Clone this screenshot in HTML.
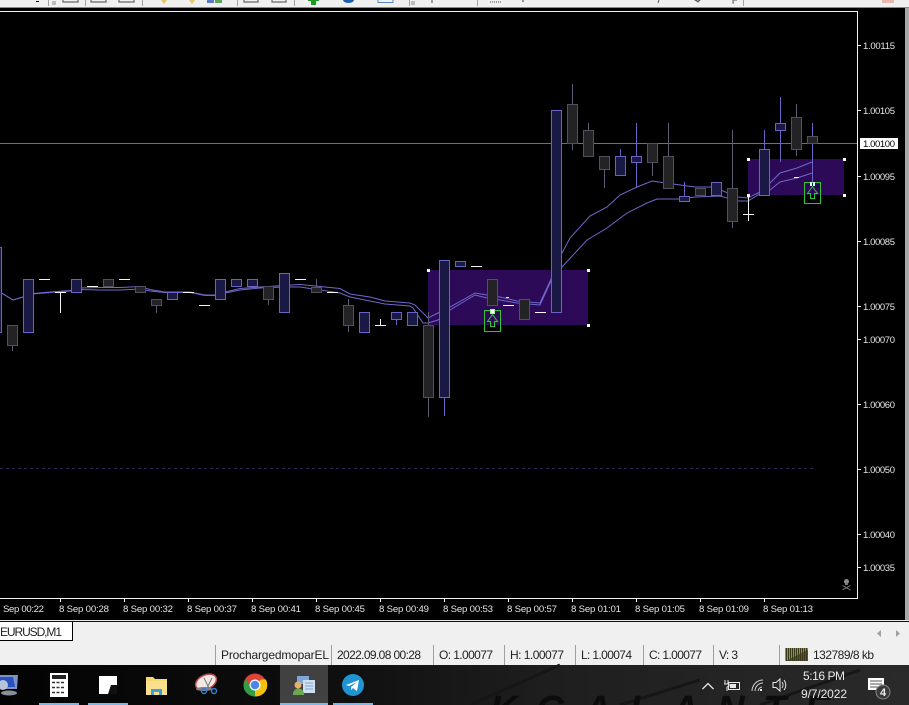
<!DOCTYPE html>
<html><head><meta charset="utf-8"><style>
html,body{margin:0;padding:0;background:#000;width:909px;height:705px;overflow:hidden}
svg{display:block}
text{font-family:"Liberation Sans",sans-serif}
.p{font-size:9.500px;fill:#e4e4e4}
.t{font-size:9.600px;fill:#e4e4e4}
.s{font-size:12px;fill:#222}
</style></head><body>
<svg width="909" height="705" viewBox="0 0 909 705" xmlns="http://www.w3.org/2000/svg">
<defs><linearGradient id="tb" x1="0" x2="1" y1="0" y2="0"><stop offset="0" stop-color="#030303"/><stop offset=".35" stop-color="#0e0e0e"/><stop offset=".6" stop-color="#1e1e1e"/><stop offset="1" stop-color="#2a2a2a"/></linearGradient></defs>
<rect width="909" height="705" fill="#000"/>
<!-- top toolbar -->
<rect width="909" height="7" fill="#f0f0f0"/>
<rect y="7" width="909" height="1" fill="#8a8a8a"/>
<g fill="none" stroke="#a0a0a0"><path d="M48.500 0v6M85.500 0v6M142.500 0v6M237.500 0v6M294.500 0v6M409.500 0v6M477.500 0v6M743.500 0v6"/></g>
<path d="M52 2h4M52 4h4M411 2h4M411 4h4" stroke="#888"/>
<g stroke="#666" stroke-width="1.200" fill="none"><path d="M63 0v2h15v-2M91 0v2h15v-2M119 0v2h15v-2M244 0v2h14v-2M272 0v2h14v-2"/></g>
<path d="M36 1h3v1h-3z" fill="#000"/>
<path d="M161 0l3 4 3-4zM189 0l3 4 3-4z" fill="#e3c766"/>
<path d="M207 0h7v3h-7z" fill="#5a78c8"/><path d="M215 0h7v3h-7z" fill="#5aa85a"/>
<path d="M308 0h11v1h-11z" fill="#1c9a26"/><rect x="311" y="0" width="5" height="5" fill="#1c9a26"/>
<path d="M343 0a5.500 3 0 0 0 11 0z" fill="#1f5fb0"/>
<path d="M378 0v2.500h15V0" fill="none" stroke="#5a86c0"/>
<path d="M432 0v3" stroke="#444"/><path d="M490 2h11" stroke="#444" stroke-dasharray="1 1"/><path d="M523 0v2" stroke="#333"/>
<path d="M659 0l-1 3M695 0h5l-2 2zM733 0v3h1M733 0h4" stroke="#555" fill="none"/>
<rect x="882" y="0" width="12" height="3" fill="#e8b9a8"/>
<rect x="905" y="8" width="4" height="614" fill="#a8a8a8"/>
<!-- chart frame -->
<path d="M0 11.500H857.500V598.500H0" fill="none" stroke="#f2f2f2"/>
<!-- purple boxes -->
<rect x="428" y="270" width="160" height="55" fill="#2c0a58"/>
<rect x="748" y="159" width="96" height="36" fill="#2c0a58"/>
<!-- level lines -->
<path d="M0 143.500H857" stroke="#70707c"/>
<path d="M0 468.500H813" stroke="#2a2850" stroke-dasharray="3 3"/>
<!-- MAs -->
<g fill="none" stroke="#6f68cc" stroke-width="1">
<path d="M0 292L13 300L23 297L33 293.500L50 292L70 290.500L80 288L100 287.500L120 287.500L140 286.500L150 289.500L165 292L190 292L205 295L215 295L225 292L240 288.500L260 287L284 285.500L300 284.500L340 288.500L350 294L370 297L385 301L410 303L415 305L428 318L438 313L450 307L475 293L487 295L500 297L517 301L540 303L552 277L562 253L570 238L590 216L607 207L620 195L637 187L652 181L673 184L695 187L713 187L738 197L748 198L760 192L770 183L780 173L797 168L812 162"/>
<path d="M0 292L13 300L23 297L33 294L50 292.500L70 291L80 289.500L100 290L120 290L140 289L150 291L165 292.500L190 292.500L205 295.500L215 295.500L225 293L240 290L260 288L284 287L300 287L340 293L350 297L370 301L385 304L410 306L413 308L423 323L428 323L438 320L450 310L475 295L487 298L500 300L517 303L540 305L550 283L562 267L587 240L607 228L627 213L647 203L657 199L680 199L695 197L720 196L738 201L748 201L758 195L770 190L780 182L797 178L812 173"/>
</g>
<!-- dark wicks -->
<path d="M12.500 346V351M156.500 305V313M268.500 299V305M316.500 279V287M348.500 299V332M428.500 312V417M524.500 319V320M572.500 84V150M588.500 123V130M604.500 169V188M652.500 162V176M668.500 123V156M732.500 130V228M796.500 104V156" stroke="#5c5c74"/>
<!-- blue wicks -->
<path d="M444.500 397V416M396.500 319V325M620.500 149V156M636.500 123V188M684.500 182V196M764.500 130V149M780.500 97V162M812.500 123V182" stroke="#6a62c4"/>
<!-- blue bodies -->
<path d="M-3.500 247.500h5v85h-5zM23.500 279.500h10v53h-10zM71.500 279.500h10v13h-10zM167.500 292.500h10v7h-10zM215.500 279.500h10v20h-10zM231.500 279.500h10v7h-10zM247.500 279.500h10v7h-10zM279.500 273.500h10v39h-10zM359.500 312.500h10v20h-10zM391.500 312.500h10v7h-10zM407.500 312.500h10v13h-10zM439.500 260.500h10v137h-10zM455.500 261.500h10v5h-10zM551.500 110.500h10v202h-10zM615.500 156.500h10v19h-10zM631.500 156.500h10v6h-10zM679.500 196.500h10v5h-10zM711.500 182.500h10v13h-10zM759.500 149.500h10v46h-10zM775.500 123.500h10v7h-10z" fill="#1a1845" stroke="#6a62c4"/>
<!-- dark bodies -->
<path d="M7.500 325.500h10v20h-10zM103.500 279.500h10v7h-10zM135.500 286.500h10v6h-10zM151.500 299.500h10v6h-10zM263.500 286.500h10v13h-10zM311.500 287.500h10v5h-10zM343.500 305.500h10v20h-10zM423.500 325.500h10v72h-10zM487.500 279.500h10v26h-10zM519.500 299.500h10v20h-10zM567.500 104.500h10v39h-10zM583.500 130.500h10v26h-10zM599.500 156.500h10v13h-10zM647.500 143.500h10v19h-10zM663.500 156.500h10v32h-10zM695.500 188.500h10v7h-10zM727.500 188.500h10v33h-10zM791.500 117.500h10v32h-10zM807.500 136.500h10v7h-10z" fill="#232326" stroke="#50505e"/>
<!-- white dojis -->
<path d="M39 279.500h11M55 292.500h11M60.500 292V313M87 286.500h11M119 279.500h11M183 292.500h11M199 305.500h11M295 279.500h11M327 292.500h11M375 325.500h11M380.500 319V325M471 266.500h11M503 305.500h11M535 312.500h11M506 297.500h3M794 177.500h5" stroke="#f4f4f4"/>
<path d="M748.500 196V221M743 214.500h11" stroke="#f4f4f4"/>
<!-- handles -->
<g fill="#fff"><rect x="427" y="269" width="3" height="3"/><rect x="587" y="269" width="3" height="3"/><rect x="587" y="324" width="3" height="3"/><rect x="747" y="158" width="3" height="3"/><rect x="843" y="158" width="3" height="3"/><rect x="843" y="194" width="3" height="3"/><rect x="747" y="194" width="3" height="3"/></g>
<!-- arrows -->
<g fill="none" stroke="#2fc62f">
<rect x="484.500" y="310.500" width="16" height="21"/>
<path d="M492.500 314.500L487.500 321.500H490.500V326.500H494.500V321.500H497.500Z"/>
<rect x="804.500" y="182.500" width="16" height="21"/>
<path d="M812.500 186.500L807.500 193.500H810.500V198.500H814.500V193.500H817.500Z"/>
</g>
<rect x="490" y="309" width="5" height="5" fill="#a8f0a0"/><rect x="491" y="310" width="3" height="3" fill="#fff"/>
<rect x="810" y="182" width="2" height="4" fill="#dff"/><rect x="813" y="182" width="2" height="4" fill="#dff"/>
<!-- price axis -->
<path d="M857 45.500h4M857 110.500h4M857 176.500h4M857 241.500h4M857 306.500h4M857 339.500h4M857 404.500h4M857 469.500h4M857 534.500h4M857 567.500h4" stroke="#eee"/>
<text class="p" x="863" y="49" textLength="32">1.00115</text>
<text class="p" x="863" y="114" textLength="32">1.00105</text>
<text class="p" x="863" y="180" textLength="32">1.00095</text>
<text class="p" x="863" y="245" textLength="32">1.00085</text>
<text class="p" x="863" y="310" textLength="32">1.00075</text>
<text class="p" x="863" y="343" textLength="32">1.00070</text>
<text class="p" x="863" y="408" textLength="32">1.00060</text>
<text class="p" x="863" y="473" textLength="32">1.00050</text>
<text class="p" x="863" y="538" textLength="32">1.00040</text>
<text class="p" x="863" y="571" textLength="32">1.00035</text>
<rect x="860" y="138" width="38" height="11" fill="#fff"/>
<text x="863" y="147" font-size="9.500" fill="#000" textLength="32">1.00100</text>
<!-- skull -->
<circle cx="846.500" cy="581.500" r="2.500" fill="#8a8a8a"/><rect x="845" y="583" width="3" height="2" fill="#777"/>
<path d="M842.500 585.500l8 4.500M850.500 585.500l-8 4.500" stroke="#808080" fill="none"/>
<!-- time axis -->
<path d="M60.500 598v4M124.500 598v4M188.500 598v4M252.500 598v4M316.500 598v4M380.500 598v4M444.500 598v4M508.500 598v4M572.500 598v4M636.500 598v4M700.500 598v4M764.500 598v4" stroke="#eee"/>
<text class="t" x="3" y="612" textLength="41">Sep 00:22</text>
<text class="t" x="59" y="612" textLength="50">8 Sep 00:28</text>
<text class="t" x="123" y="612" textLength="50">8 Sep 00:32</text>
<text class="t" x="187" y="612" textLength="50">8 Sep 00:37</text>
<text class="t" x="251" y="612" textLength="50">8 Sep 00:41</text>
<text class="t" x="315" y="612" textLength="50">8 Sep 00:45</text>
<text class="t" x="379" y="612" textLength="50">8 Sep 00:49</text>
<text class="t" x="443" y="612" textLength="50">8 Sep 00:53</text>
<text class="t" x="507" y="612" textLength="50">8 Sep 00:57</text>
<text class="t" x="571" y="612" textLength="50">8 Sep 01:01</text>
<text class="t" x="635" y="612" textLength="50">8 Sep 01:05</text>
<text class="t" x="699" y="612" textLength="50">8 Sep 01:09</text>
<text class="t" x="763" y="612" textLength="50">8 Sep 01:13</text>
<!-- tab strip -->
<rect y="620" width="909" height="1" fill="#e8e8e8"/>
<rect y="621" width="909" height="1" fill="#111"/>
<rect y="622" width="909" height="20" fill="#f0f0f0"/>
<rect x="0" y="622" width="72" height="19" fill="#fff"/>
<path d="M0 640.500H72.500V622" fill="none" stroke="#000"/>
<text x="0" y="636" font-size="12" fill="#222" textLength="62">EURUSD,M1</text>
<path d="M881 630l-4 3.500 4 3.500zM896 630l4 3.500-4 3.500z" fill="#a0a0a0"/>
<!-- status bar -->
<rect y="642" width="909" height="23" fill="#f0f0f0"/>
<path d="M215.500 645v20M331.500 645v20M433.500 645v20M504.500 645v20M575.500 645v20M643.500 645v20M713.500 645v20M779.500 645v20" stroke="#a0a0a0"/>
<text class="s" x="221" y="659" textLength="108">ProchargedmoparEL</text>
<text class="s" x="337" y="659" textLength="84">2022.09.08 00:28</text>
<text class="s" x="439" y="659" textLength="54">O: 1.00077</text>
<text class="s" x="510" y="659" textLength="54">H: 1.00077</text>
<text class="s" x="581" y="659" textLength="51">L: 1.00074</text>
<text class="s" x="649" y="659" textLength="53">C: 1.00077</text>
<text class="s" x="719" y="659" textLength="19">V: 3</text>
<text class="s" x="813" y="659" textLength="61">132789/8 kb</text>
<rect x="785" y="648" width="23" height="13" fill="#3a3a18"/>
<g fill="#7f9f1e"><rect x="785" y="648" width="1" height="13"/><rect x="787" y="648" width="1" height="12"/><rect x="789" y="648" width="1" height="11"/><rect x="791" y="648" width="1" height="10"/><rect x="793" y="648" width="1" height="9"/><rect x="795" y="648" width="1" height="8"/><rect x="797" y="648" width="1" height="7"/><rect x="799" y="648" width="1" height="6"/><rect x="801" y="648" width="1" height="5"/><rect x="803" y="648" width="1" height="4"/><rect x="805" y="648" width="1" height="3"/><rect x="807" y="648" width="1" height="2"/></g>
<g fill="#c02020"><rect x="787" y="660" width="1" height="1"/><rect x="789" y="659" width="1" height="2"/><rect x="791" y="658" width="1" height="3"/><rect x="793" y="657" width="1" height="4"/><rect x="795" y="656" width="1" height="5"/><rect x="797" y="655" width="1" height="6"/><rect x="799" y="654" width="1" height="7"/><rect x="801" y="653" width="1" height="8"/><rect x="803" y="652" width="1" height="9"/><rect x="805" y="651" width="1" height="10"/><rect x="807" y="650" width="1" height="11"/></g>
<!-- taskbar -->
<rect y="665" width="909" height="40" fill="url(#tb)"/>
<path d="M470 705L560 665M620 705L700 680M760 705L860 670" stroke="#161616" stroke-width="3" fill="none"/>
<text x="490" y="722" font-size="38" font-weight="bold" font-style="italic" fill="#0c0c0c" textLength="340">KGALANTE</text>
<rect x="280" y="665" width="48" height="40" fill="#414141"/>
<path d="M39 703h40v2H39zM88 703h40v2H88zM280 703h48v2h-48zM333 703h40v2h-40z" fill="#76b9ed"/>
<!-- computer -->
<path d="M-2 675h20l-1 14H-2z" fill="#7d93c7"/><path d="M0 677h13l2 10H0z" fill="#2a52c0"/><circle cx="3" cy="685" r="5" fill="#b8c4d8"/><ellipse cx="9" cy="693" rx="8" ry="2.500" fill="#8a8f98"/>
<!-- calc -->
<rect x="50" y="673" width="18" height="24" fill="#fff"/><rect x="52" y="675" width="14" height="4" fill="#222"/>
<path d="M52 682.500h3M56.500 682.500h3M61 682.500h3M52 687.500h3M56.500 687.500h3M61 687.500h3M52 692.500h3M56.500 692.500h3M61 692.500h3" stroke="#333" stroke-width="1.500"/>
<!-- sticky -->
<rect x="99" y="676" width="18" height="18" fill="#fff"/><path d="M111 685h6v9h-9z" fill="#111"/>
<!-- folder -->
<path d="M146 677h7l2 2h12v16h-21z" fill="#f7d774"/><rect x="146" y="681" width="21" height="14" fill="#fbe08c"/><path d="M151 689h11v6h-3v-3h-5v3h-3z" fill="#3a9fe0"/>
<!-- snip -->
<ellipse cx="206" cy="682" rx="11" ry="7" transform="rotate(-25 206 682)" fill="#f2e8e6" stroke="#b84a4a" stroke-width="1.500"/><ellipse cx="204" cy="689" rx="8" ry="2" fill="#8f7f7f"/>
<path d="M204 678l5 10M212 678l-5 10" stroke="#777"/>
<circle cx="204" cy="691" r="2.500" fill="none" stroke="#2f7ed8" stroke-width="1.500"/><circle cx="214" cy="691" r="2.500" fill="none" stroke="#2f7ed8" stroke-width="1.500"/>
<!-- chrome -->
<circle cx="255" cy="685" r="11.500" fill="#db4437"/>
<path d="M255 685L245 690.800A11.500 11.500 0 0 0 255 696.500L261 685z" fill="#2f9e44"/>
<path d="M255 685l6-5.500h4.900A11.500 11.500 0 0 1 255 696.500z" fill="#f4c20d"/>
<path d="M245 691a11.500 11.500 0 0 1 1-12l5 9z" fill="#2f9e44"/>
<circle cx="255" cy="685" r="5.500" fill="#fff"/><circle cx="255" cy="685" r="4.300" fill="#4a85e8"/>
<!-- active app -->
<rect x="297" y="676" width="12" height="8" fill="#7ea6d8"/><rect x="303" y="680" width="12" height="13" fill="#cfe0f0"/><path d="M305 683h8M305 686h8M305 689h8" stroke="#7ea6d8"/>
<circle cx="298" cy="685" r="3.500" fill="#e8b070"/><path d="M293 694a5 5 0 0 1 11 0v1h-11z" fill="#6aa84f"/>
<!-- telegram -->
<circle cx="353" cy="685" r="11" fill="#1f96d3"/><path d="M346 685l13-5-2 11-4-3-2 2v-3l6-5-8 4z" fill="#fff"/>
<!-- tray -->
<path d="M702.500 689l5.500-5.500 5.500 5.500" fill="none" stroke="#e8e8e8" stroke-width="1.300"/>
<rect x="728.500" y="682.500" width="11" height="7" fill="none" stroke="#e8e8e8"/><rect x="730" y="684" width="6" height="4" fill="#e8e8e8"/><path d="M725 680v4M728 680v4M724 684h5v2l-2 1v4" stroke="#e8e8e8" fill="none"/>
<path d="M752 691a11 11 0 0 1 11-11M755 691a8 8 0 0 1 8-8M758 691a5 5 0 0 1 4-4" fill="none" stroke="#cfcfcf"/><rect x="760" y="689" width="2" height="2" fill="#e8e8e8"/>
<path d="M773 682.500h3l4-3.500v12l-4-3.500h-3z" fill="none" stroke="#e8e8e8"/><path d="M782 682a5 5 0 0 1 0 6M784 680a8 8 0 0 1 0 10" fill="none" stroke="#e8e8e8"/>
<text x="803" y="680" font-size="12" fill="#e8e8e8" textLength="42">5:16 PM</text>
<text x="801" y="698" font-size="12" fill="#e8e8e8" textLength="46">9/7/2022</text>
<path d="M868 678h16v12h-3l-3 3v-3h-10z" fill="#fff"/><path d="M870 681h12M870 684h12M870 687h8" stroke="#555"/>
<circle cx="883" cy="692" r="7" fill="#3a3a3a" stroke="#888"/>
<text x="883" y="696" font-size="11" font-weight="bold" fill="#eee" text-anchor="middle">4</text>
</svg>
</body></html>
